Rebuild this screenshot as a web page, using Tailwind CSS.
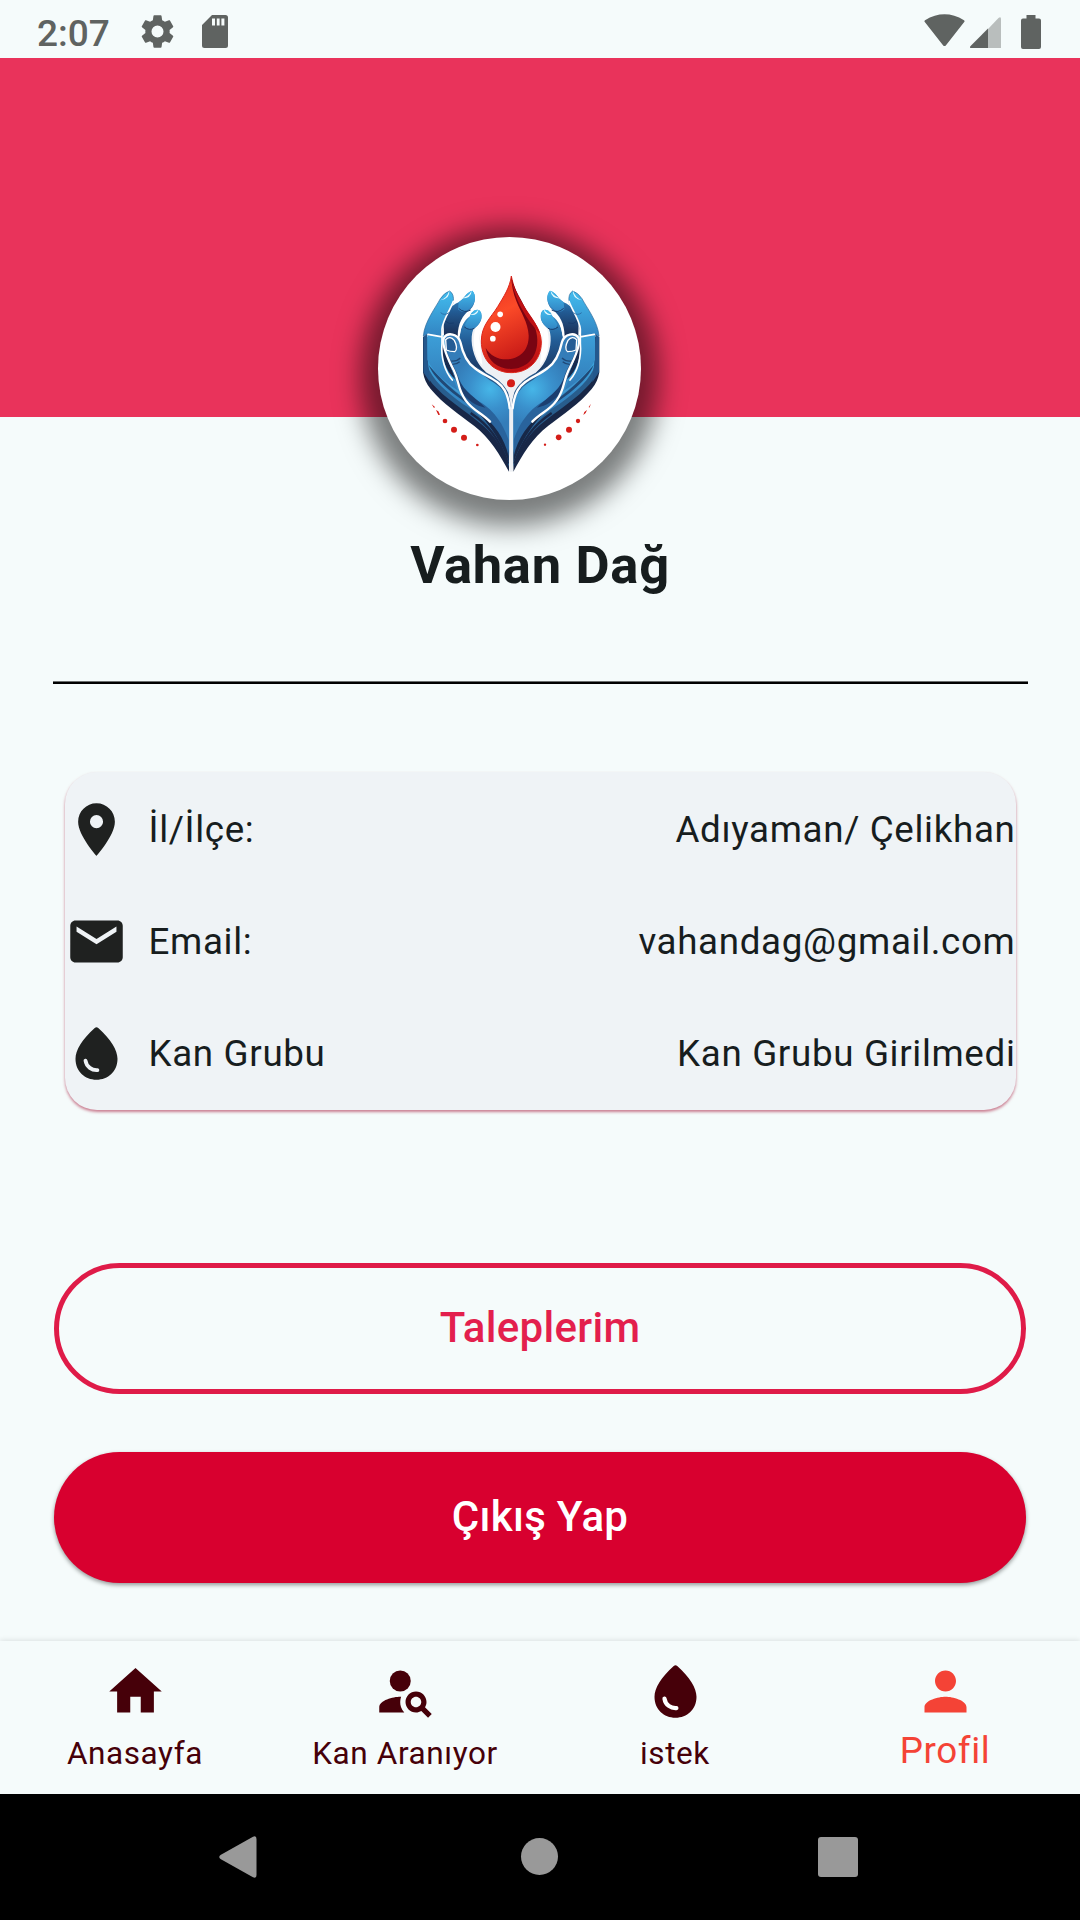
<!DOCTYPE html>
<html lang="tr">
<head>
<meta charset="utf-8">
<title>Profil</title>
<script src="https://cdn.jsdelivr.net/npm/@tailwindcss/browser@4"></script>
</head>
<body class="w-[1080px] h-[1920px] overflow-hidden bg-[#f5fbfb] font-['Roboto',sans-serif] text-[#171d1e] flex flex-col">

<!-- Status bar -->
<header class="h-[58px] shrink-0 flex items-center justify-between pl-[37px] pr-[39px] pt-[5px] text-[#5f6361]">
  <div class="flex items-center">
    <span class="w-[101px] text-[37px] leading-none font-medium pt-[3px]">2:07</span>
    <svg class="size-[39px]" viewBox="0 0 24 24" fill="currentColor"><path d="M19.430 12.980c.04-.32.07-.64.07-.98s-.03-.66-.07-.98l2.110-1.650c.19-.15.24-.42.12-.64l-2-3.460c-.12-.22-.39-.3-.61-.22l-2.490 1c-.52-.4-1.080-.73-1.690-.98l-.38-2.650C14.460 2.180 14.250 2 14 2h-4c-.25 0-.46.18-.49.42l-.38 2.650c-.61.25-1.170.59-1.690.98l-2.490-1c-.23-.09-.49 0-.61.22l-2 3.460c-.13.22-.07.49.12.640l2.110 1.650c-.04.32-.07.65-.07.98s.03.66.07.98l-2.110 1.650c-.19.15-.24.42-.12.640l2 3.460c.12.22.39.3.61.22l2.490-1c.52.4 1.080.73 1.690.98l.38 2.650c.03.24.24.42.49.42h4c.25 0 .46-.18.49-.42l.38-2.650c.61-.25 1.170-.59 1.690-.98l2.490 1c.23.09.49 0 .61-.22l2-3.460c.12-.22.07-.49-.12-.640zM12 15.700a3.700 3.700 0 1 1 0-7.400 3.700 3.700 0 0 1 0 7.400z"/></svg>
    <svg class="w-[26px] h-[33px] ml-[25px]" viewBox="0 0 26 33" fill="currentColor"><path fill-rule="evenodd" d="M10 0H23.500Q26 0 26 2.500V30.500Q26 33 23.500 33H2.500Q0 33 0 30.500V10ZM10 3.500V10.500H13V3.500ZM14.800 3.500V10.500H17.600V3.500ZM19.400 3.500V10.500H22.400V3.500Z"/></svg>
  </div>
  <div class="flex items-end">
    <svg class="w-[41px] h-[33px] mb-[2px]" viewBox="0 0 41 33" fill="currentColor"><path d="M.8 8Q0 7 1 6.200Q20.500-5.500 40 6.200Q41 7 40.200 8L22 31.200Q20.500 33 19 31.200Z"/></svg>
    <svg class="w-[31px] h-[31px] ml-[5px] mb-[1px]" viewBox="0 0 31 31" fill="currentColor"><path opacity=".4" d="M18 12 28.500 1Q31-1 31 2V31H18Z"/><path d="M18 11.500V31H1.500Q-1 31 .6 29Z"/></svg>
    <svg class="w-[20px] h-[34px] ml-[20px]" viewBox="0 0 20 34" fill="currentColor"><path d="M5.500 0h9v3.500H18q2 0 2 2V32q0 2-2 2H2q-2 0-2-2V5.500q0-2 2-2h3.500Z"/></svg>
  </div>
</header>

<!-- Cover with the avatar overlapping its lower edge -->
<section class="relative h-[359px] shrink-0 bg-[#e9335b]">
  <div class="absolute left-[378px] top-[179px] size-[263px] rounded-full bg-white shadow-[0_8px_27px_18px_rgba(0,0,0,0.5)]">
    <svg class="absolute left-[32px] top-[28px] w-[200px] h-[215px]" viewBox="0 0 600 645">
      <defs>
        <linearGradient id="skin" x1="0" y1="0" x2="0" y2="1"><stop offset="0" stop-color="#43b9ec"/><stop offset=".5" stop-color="#3486c4"/><stop offset="1" stop-color="#234f84"/></linearGradient>
        <linearGradient id="finger" x1="0" y1="0" x2="0" y2="1"><stop offset="0" stop-color="#42bcee"/><stop offset="1" stop-color="#3284c2"/></linearGradient>
        <linearGradient id="knuckle" x1="0" y1="0" x2="0" y2="1"><stop offset="0" stop-color="#3999d4"/><stop offset=".45" stop-color="#225b94"/><stop offset="1" stop-color="#192c52"/></linearGradient>
        <linearGradient id="back" x1="0" y1="0" x2="0" y2="1"><stop offset="0" stop-color="#3c9fd8"/><stop offset="1" stop-color="#327bb8"/></linearGradient>
        <radialGradient id="palm" gradientUnits="userSpaceOnUse" cx="240" cy="372" r="110"><stop offset="0" stop-color="#46b6e8"/><stop offset=".55" stop-color="#3a90cc"/><stop offset="1" stop-color="#347db9"/></radialGradient>
        <linearGradient id="drop" x1=".3" y1="0" x2=".6" y2="1"><stop offset="0" stop-color="#e83420"/><stop offset=".35" stop-color="#fb4a28"/><stop offset="1" stop-color="#bb0d12"/></linearGradient>
        <g id="hand">
          <!-- wrist and back of the hand -->
          <path fill="#182747" d="M39 215V322Q44 352 62 372C98 416 150 450 192 482C240 518 270 570 297 620V435L200 300L120 220Z"/>
          <path fill="#285d8d" d="M46 225V318Q54 346 80 370C124 416 192 454 234 496C266 528 284 570 297 606V540L190 420L90 300Z"/>
          <path fill="url(#skin)" d="M52 215V300C64 342 110 382 160 418C220 452 275 520 296 596V470L170 340L100 210Z"/>
          <path fill="#214976" d="M56 300C76 352 150 402 206 438C256 474 284 522 296 575V520C270 465 220 440 190 420C130 380 90 340 56 300Z"/>
          <path fill="none" stroke="#439bd1" stroke-width="5" d="M66 290C84 332 120 360 168 400"/>
          <path fill="#172848" d="M146 372C185 435 250 468 296 590V500L210 420Z"/>
          <path fill="none" stroke="#182747" stroke-width="7" d="M182 444C235 480 268 520 294 596"/>
          <!-- ring and middle fingers -->
          <path fill="#eef0f4" d="M214 152C190 185 182 240 204 283C222 318 262 330 304 350V432C285 370 230 345 196 318L160 240L190 155ZM206 200L220 270Q250 320 304 325V400L220 325Z"/>
          <path fill="url(#knuckle)" d="M180 154C184 137 208 125 214 145C219 165 207 181 190 193C180 217 184 262 207 298C219 316 240 333 257 346C218 334 178 303 160 265L148 222C151 189 161 167 180 154Z"/>
          <path fill="none" stroke="#fff" stroke-width="5" d="M147 212C149 178 166 152 190 135"/>
          <path fill="url(#knuckle)" d="M146 112C163 100 169 82 187 77C199 89 198 116 181 133C157 151 144 175 143 214L125 207L102 216L101 160C108 139 123 122 146 112Z"/>
          <path fill="url(#finger)" d="M146 112C163 100 169 82 187 77C199 89 198 113 181 130Q160 150 144 133Z"/>
          <path fill="url(#finger)" d="M180 154C184 137 207 125 213 145C218 166 207 181 190 191Q170 200 165 178Z"/>
          <path fill="none" stroke="#173c6d" stroke-width="3" d="M146 130Q163 146 182 135M163 186Q178 198 193 190M106 168Q116 180 132 174"/>
          <!-- index finger -->
          <path fill="url(#finger)" stroke="#286699" stroke-width="2" d="M40 213C43 171 78 126 91 101Q103 83 119 78Q133 87 130 111C124 135 105 148 101 172L94 211Q70 218 51 208Z"/>
          <path fill="#24588d" d="M51 207L40 215V322L60 352L54 290Z"/>
          <path fill="url(#back)" d="M52 208L95 214V260C96 302 110 328 133 347L143 376C97 346 65 314 52 284Z"/>
          <path fill="#172b50" d="M98 222C105 273 122 304 138 345C103 315 91 270 98 222Z"/>
          <path fill="none" stroke="#fff" stroke-width="5" stroke-linecap="round" d="M130 109C121 136 99 162 96 192V235C92 281 106 321 127 345M54 208L92 215"/>
          <path fill="none" stroke="#2866a0" stroke-width="2.500" d="M92 143Q103 153 117 143"/>
          <path fill="#e8faff" d="M90 106Q112 100 118 76Q120 104 90 106M151 100Q176 96 185 77Q184 102 151 100M177 149Q197 149 206 132Q203 155 177 149"/>
          <!-- thumb and palm -->
          <path fill="url(#palm)" d="M103 216C120 198 145 210 151 232C159 267 172 292 194 309C226 334 267 342 288 382Q299 405 302 435V590C295 520 258 476 215 448C158 417 151 382 136 344C125 309 101 257 103 216Z"/>
          <path fill="#29639c" d="M136 344C149 348 163 376 188 400C226 416 270 450 296 525V574C283 518 252 478 213 445C169 416 153 384 136 344Z"/>
          <path fill="#1c3e6f" d="M105 245C117 283 134 304 147 343C164 382 194 396 226 428C200 424 170 406 151 376C138 342 121 309 105 245Z"/>
          <path fill="#27588b" d="M198 304C232 329 270 336 294 382Q301 402 302 430Q288 374 252 353Q220 337 198 304Z"/>
          <path fill="none" stroke="#fff" stroke-width="7" stroke-linecap="round" stroke-linejoin="round" d="M240 470C215 443 190 438 167 406C143 374 148 350 132 317C116 286 93 235 102 218C113 201 143 206 151 231C158 264 169 292 194 309C226 335 265 343 284 376Q296 398 299 430"/>
          <path fill="#245c94" stroke="#fff" stroke-width="4" d="M107 224Q120 211 133 226Q146 251 134 260Q120 260 109 255Z"/>
          <path fill="none" stroke="#204977" stroke-width="4" d="M124 288Q140 290 151 279M128 298Q140 298 149 290"/>
        </g>
      </defs>
      <use href="#hand"/>
      <use href="#hand" transform="translate(607 0) scale(-1 1)"/>
      <path stroke="#eef0f4" stroke-width="12" d="M303.500 432V620"/>
      <path fill="url(#drop)" stroke="#dd2418" stroke-width="3" d="M304 33C300 67 281 95 263 125C243 158 214 181 214 228C214 286 252 323 304 323S394 286 394 231C394 191 360 157 338 121C320 91 310 63 304 33Z"/>
      <path fill="#790412" d="M304 36C310 69 338 111 350 137C369 169 382 195 382 226C382 283 345 312 303 312C264 312 234 289 227 249C242 273 264 284 292 283C337 280 357 248 356 211C354 171 332 142 319 108C309 84 305 60 304 36Z"/>
      <path fill="#be1013" d="M304 36C309 66 325 93 341 121C359 151 382 176 391 207C369 185 350 160 336 133C317 97 307 67 304 36Z"/>
      <g fill="#fff"><circle cx="270.500" cy="148" r="8.500"/><circle cx="256.500" cy="186" r="15"/><circle cx="248.500" cy="221" r="8.500"/></g>
      <g fill="#d41d18"><circle cx="303" cy="355" r="12"/>
        <circle cx="105" cy="468" r="7"/><circle cx="132" cy="494" r="9"/><circle cx="162" cy="518" r="9"/><circle cx="202" cy="540" r="4"/>
        <circle cx="504" cy="468" r="6.500"/><circle cx="477" cy="494" r="9"/><circle cx="446" cy="517" r="8.500"/><circle cx="405" cy="539" r="3.500"/>
        <path d="M65 418l10 8-3 3zM78 435l7 4 5 10-5 1zM543 416l-5 12-2-2zM531 435l-4 9-7 6 3-9z"/></g>
    </svg>
  </div>
</section>

<main class="h-[1224px] shrink-0 flex flex-col items-center">
  <h1 class="mt-[117px] h-[62px] leading-[62px] text-[52.5px] font-bold tracking-[0.7px]">Vahan Dağ</h1>
  <div class="mt-[85px] w-[975px] h-[3px] bg-black border-t border-[#6b6e6e]"></div>

  <!-- Contact card -->
  <section class="mt-[88px] w-[951px] h-[338px] pt-[1px] rounded-[32px] bg-[#eff3f6] text-[36.75px] tracking-[0.66px] grid grid-rows-3 shadow-[0_2px_3px_rgba(160,0,40,0.5)]">
    <div class="flex items-center">
      <svg class="size-[63px] text-[#1f2120]" viewBox="0 0 24 24" fill="currentColor"><path d="M12 2C8.130 2 5 5.130 5 9c0 5.250 7 13 7 13s7-7.750 7-13c0-3.870-3.130-7-7-7zm0 9.500a2.500 2.500 0 0 1 0-5 2.500 2.500 0 0 1 0 5z"/></svg>
      <span class="ml-[21px]">İl/İlçe:</span><span class="ml-auto">Adıyaman/ Çelikhan</span>
    </div>
    <div class="flex items-center">
      <svg class="size-[63px] text-[#1f2120]" viewBox="0 0 24 24" fill="currentColor"><path d="M20 4H4c-1.100 0-1.990.9-1.990 2L2 18c0 1.100.9 2 2 2h16c1.100 0 2-.9 2-2V6c0-1.100-.9-2-2-2zm-.4 4.250-7.600 4.750-7.600-4.750V6.250L12 11l7.600-4.750z"/></svg>
      <span class="ml-[21px]">Email:</span><span class="ml-auto">vahandag@gmail.com</span>
    </div>
    <div class="flex items-center">
      <svg class="size-[63px] text-[#1f2120]" viewBox="0 0 24 24"><path fill="currentColor" d="M12.660 2.260c-.38-.34-.95-.34-1.330 0C6.450 6.690 4 10.620 4 14c0 4.880 3.610 8 8 8s8-3.120 8-8c0-3.380-2.450-7.310-7.340-11.740z"/><path fill="none" stroke="#eff3f6" stroke-width="1.450" stroke-linecap="round" d="M7.800 14.700c.35 2.450 2.500 3.750 4.550 3.600"/></svg>
      <span class="ml-[21px]">Kan Grubu</span><span class="ml-auto">Kan Grubu Girilmedi</span>
    </div>
  </section>

  <button class="mt-[153px] w-[972px] h-[131px] pb-[2px] rounded-full border-[5px] border-[#df1b48] text-[#e31f4d] text-[42px] font-medium tracking-[0.3px]">Taleplerim</button>
  <button class="mt-[58px] w-[972px] h-[131px] pb-[2px] rounded-full bg-[#d8002f] text-white text-[42px] font-medium tracking-[0.3px] shadow-[0_2px_4px_rgba(0,0,0,0.4)]">Çıkış Yap</button>
</main>

<!-- Tabs -->
<nav class="h-[153px] shrink-0 grid grid-cols-4 bg-[#f5fbfb] shadow-[0_-1px_5px_rgba(0,0,0,0.1)] text-[#460009] text-[31.5px] tracking-[0.6px] leading-[42px]">
  <div class="flex flex-col items-center pt-[19px]">
    <svg class="size-[63px]" viewBox="0 0 24 24" fill="currentColor"><path d="M10 20v-6h4v6h5v-8h3L12 3 2 12h3v8z"/></svg>
    <span class="mt-[10px]">Anasayfa</span>
  </div>
  <div class="flex flex-col items-center pt-[19px]">
    <svg class="size-[63px]" viewBox="0 0 24 24" fill="currentColor"><circle cx="10" cy="8" r="4"/><path d="M10.350 14.010C7.620 13.910 2 15.270 2 18v2h9.540c-2.470-2.760-1.230-5.890-1.190-5.990zM19.430 18.020c.36-.59.57-1.280.57-2.020 0-2.210-1.790-4-4-4s-4 1.790-4 4 1.790 4 4 4c.74 0 1.430-.22 2.020-.57L20.590 22 22 20.590l-2.570-2.570zM16 18c-1.100 0-2-.9-2-2s.9-2 2-2 2 .9 2 2-.9 2-2 2z"/></svg>
    <span class="mt-[10px]">Kan Aranıyor</span>
  </div>
  <div class="flex flex-col items-center pt-[19px]">
    <svg class="size-[63px]" viewBox="0 0 24 24"><path fill="currentColor" d="M12.660 2.260c-.38-.34-.95-.34-1.330 0C6.450 6.690 4 10.620 4 14c0 4.880 3.610 8 8 8s8-3.120 8-8c0-3.380-2.450-7.310-7.340-11.740z"/><path fill="none" stroke="#fff" stroke-width="1.600" stroke-linecap="round" d="M7.800 14.700c.35 2.450 2.500 3.750 4.550 3.600"/></svg>
    <span class="mt-[10px]">istek</span>
  </div>
  <div class="flex flex-col items-center pt-[19px] text-[#f44336]">
    <svg class="size-[63px]" viewBox="0 0 24 24" fill="currentColor"><path d="M12 12c2.210 0 4-1.790 4-4s-1.790-4-4-4-4 1.790-4 4 1.790 4 4 4zm0 2c-2.670 0-8 1.340-8 4v2h16v-2c0-2.660-5.330-4-8-4z"/></svg>
    <span class="mt-[7px] text-[36.75px]">Profil</span>
  </div>
</nav>

<!-- System navigation -->
<footer class="h-[126px] shrink-0 bg-black flex items-center pb-[1px] pl-[219px]">
  <svg class="w-[38px] h-[42px]" viewBox="0 0 38 42" fill="#999"><path d="M34 .8Q37.500-.8 37.500 3V39Q37.500 42.800 34 41.200L1.500 23Q-1 21 1.500 19Z"/></svg>
  <div class="ml-[264px] size-[37px] rounded-full bg-[#999]"></div>
  <div class="ml-[260px] size-[40px] rounded-[3px] bg-[#999]"></div>
</footer>
</body>
</html>
